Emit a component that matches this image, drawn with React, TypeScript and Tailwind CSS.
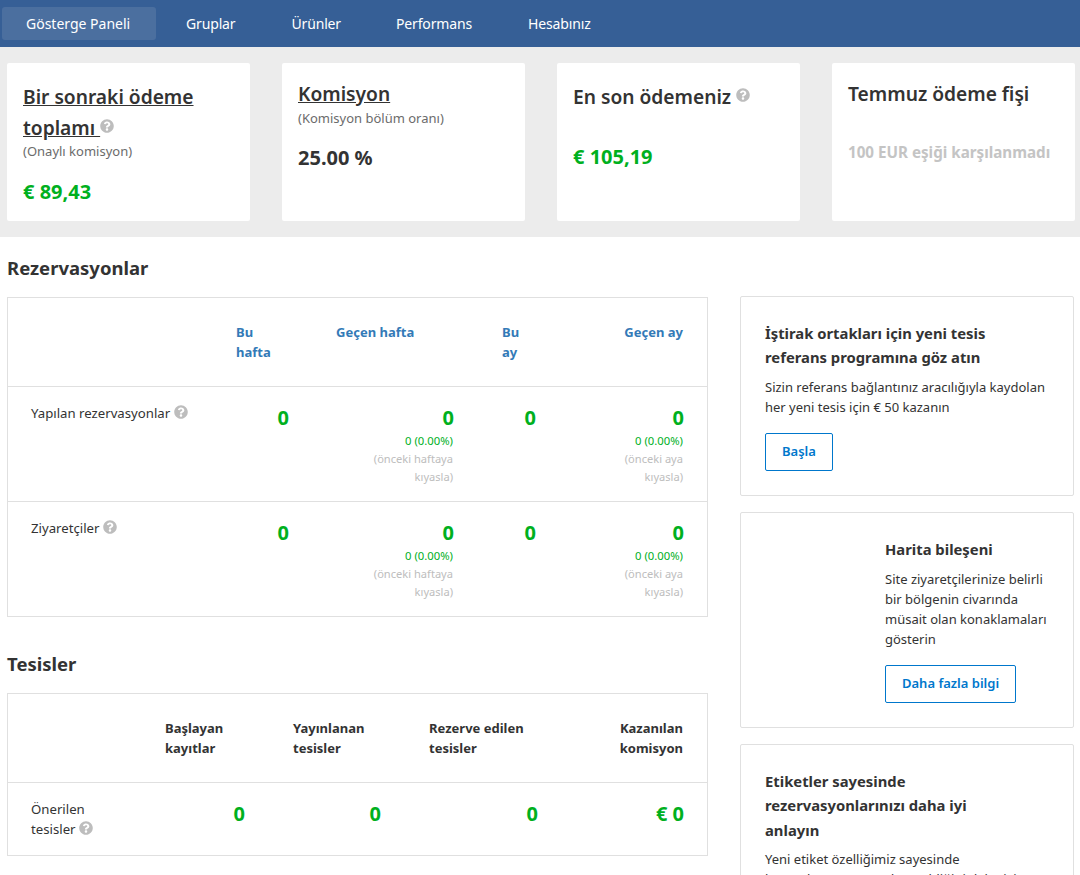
import React from 'react';
import { FaQuestionCircle } from 'react-icons/fa';

const Help = ({ className = 'align-[-1px]' }: { className?: string }) => (
  <FaQuestionCircle size={14} className={`inline-block text-[#bdbdbd] ${className}`} />
);

const Value = ({ children }: { children: React.ReactNode }) => (
  <div className="text-right -mr-[1px] text-[20px] leading-[30px] font-bold text-[#00b01e]">{children}</div>
);

const Delta = () => (
  <div className="text-[11.3px] leading-[18px] text-[#00b01e] -mt-[1px]">0 (0.00%)</div>
);

const Compare = ({ text }: { text: string }) => (
  <div className="text-[11.1px] leading-[18px] text-[#bdbdbd]">
    (önceki {text}
    <br />
    kıyasla)
  </div>
);

const BookingRow = ({ label }: { label: string }) => (
  <div className="grid grid-cols-[193px_64px_165px_82px_148px] h-[115px] pt-[16px] border-t border-[#e0e0e0] px-[23px]">
    <div className="text-[13.2px] leading-[20px] text-[#333]">
      {label} <Help />
    </div>
    <Value>0</Value>
    <div className="text-right">
      <Value>0</Value>
      <Delta />
      <Compare text="haftaya" />
    </div>
    <Value>0</Value>
    <div className="text-right">
      <Value>0</Value>
      <Delta />
      <Compare text="aya" />
    </div>
  </div>
);

const SideCard = ({ title, text, button, className }: { title: string; text: React.ReactNode; button?: string; className?: string }) => (
  <div className={`border border-[#e0e0e0] rounded-[2px] bg-white pt-[24px] ${className ?? ''}`}>
    <h3 className="max-w-[250px] text-[14.8px] leading-[24.4px] font-bold text-[#333]">{title}</h3>
    <p className="text-[13px] leading-[20px] text-[#333] mt-[7.2px]">{text}</p>
    {button && (
      <button className="mt-[16px] h-[38px] px-[16px] border border-[#0077cc] rounded-[2px] text-[13px] font-semibold text-[#0077cc]">
        {button}
      </button>
    )}
  </div>
);

export default function App() {
  return (
    <div className="h-[875px] w-[1080px] overflow-hidden bg-white text-[#333] font-['Noto_Sans','Open_Sans',sans-serif]">
      <nav className="h-[47px] bg-[#365f96] flex items-center pl-[2px] text-[14px] text-white tracking-[-0.15px]">
        <div className="h-[33px] w-[154px] pl-[24px] mr-[6px] flex items-center rounded-[3px] bg-[#4b6f9f] tracking-normal">Gösterge Paneli</div>
        <div className="h-[33px] px-[24px] mr-[8px] flex items-center">Gruplar</div>
        <div className="h-[33px] px-[24px] mr-[7px] flex items-center">Ürünler</div>
        <div className="h-[33px] px-[24px] mr-[8px] flex items-center">Performans</div>
        <div className="h-[33px] px-[24px] flex items-center">Hesabınız</div>
      </nav>

      <div className="h-[190px] bg-[#ececec] pt-[16px] px-[7px] flex gap-[32px]">
        <div className="w-[243px] shrink-0 h-[158px] bg-white rounded-[2px] px-[16px] pt-[18px]">
          <div className="text-[19.2px] leading-[31px] font-semibold text-[#333]">
            <span className="underline">Bir sonraki ödeme toplamı </span> <Help className="align-[2px]" />
          </div>
          <div className="text-[13px] leading-[16px] text-[#6b6b6b]">(Onaylı komisyon)</div>
          <div className="mt-[18px] text-[20px] leading-[30px] font-bold text-[#00b01e]">€ 89,43</div>
        </div>
        <div className="w-[243px] shrink-0 h-[158px] bg-white rounded-[2px] px-[16px] pt-[15px]">
          <div className="text-[19.2px] leading-[32px] font-semibold underline">Komisyon</div>
          <div className="text-[13px] leading-[16px] text-[#6b6b6b]">(Komisyon bölüm oranı)</div>
          <div className="mt-[17px] text-[20px] leading-[30px] font-bold">25.00 %</div>
        </div>
        <div className="w-[243px] shrink-0 h-[158px] bg-white rounded-[2px] px-[16px] pt-[18px]">
          <div className="text-[19.2px] leading-[32px] font-semibold">
            En son ödemeniz <Help className="align-[2px]" />
          </div>
          <div className="mt-[29px] text-[20px] leading-[30px] font-bold text-[#00b01e]">€ 105,19</div>
        </div>
        <div className="w-[243px] shrink-0 h-[158px] bg-white rounded-[2px] px-[16px] pt-[15px]">
          <div className="text-[19.2px] leading-[32px] font-semibold">Temmuz ödeme fişi</div>
          <div className="mt-[32px] text-[15.2px] leading-[20px] font-bold text-[#c4c4c4] whitespace-nowrap">100 EUR eşiği karşılanmadı</div>
        </div>
      </div>

      <div className="flex pl-[7px] pt-[17px]">
        <div className="w-[701px]">
          <h2 className="text-[18.5px] leading-[28px] font-bold text-[#333]">Rezervasyonlar</h2>
          <div className="mt-[15px] border border-[#e0e0e0]">
            <div className="grid grid-cols-[193px_64px_165px_82px_148px] h-[88px] px-[23px] pt-[24px] text-[13px] leading-[20px] font-bold text-[#337ab7]">
              <div />
              <div className="pl-[12px]">Bu<br />hafta</div>
              <div className="pl-[48px]">Geçen hafta</div>
              <div className="pl-[49px]">Bu<br />ay</div>
              <div className="text-right">Geçen ay</div>
            </div>
            <BookingRow label="Yapılan rezervasyonlar" />
            <BookingRow label="Ziyaretçiler" />
          </div>

          <h2 className="mt-[33px] text-[18.5px] leading-[28px] font-bold text-[#333]">Tesisler</h2>
          <div className="mt-[15px] border border-[#e0e0e0]">
            <div className="grid grid-cols-[134px_79px_136px_157px_146px] h-[88px] px-[23px] pt-[24px] text-[13px] leading-[20px] font-bold text-[#333]">
              <div />
              <div className="whitespace-nowrap">Başlayan<br />kayıtlar</div>
              <div className="pl-[49px] whitespace-nowrap">Yayınlanan<br />tesisler</div>
              <div className="pl-[49px] whitespace-nowrap">Rezerve edilen<br />tesisler</div>
              <div className="text-right">Kazanılan<br />komisyon</div>
            </div>
            <div className="grid grid-cols-[134px_79px_136px_157px_146px] h-[73px] px-[23px] pt-[16px] border-t border-[#e0e0e0]">
              <div className="text-[13.2px] leading-[20px]">Önerilen<br />tesisler <Help /></div>
              <Value>0</Value>
              <Value>0</Value>
              <Value>0</Value>
              <Value>€ 0</Value>
            </div>
          </div>
        </div>

        <div className="ml-[32px] w-[334px] pt-[42px] flex flex-col gap-[16px]">
          <SideCard
            className="h-[200px] px-[24px]"
            title="İştirak ortakları için yeni tesis referans programına göz atın"
            text="Sizin referans bağlantınız aracılığıyla kaydolan her yeni tesis için € 50 kazanın"
            button="Başla"
          />
          <SideCard
            className="h-[216px] pl-[144px] pr-[24px]"
            title="Harita bileşeni"
            text="Site ziyaretçilerinize belirli bir bölgenin civarında müsait olan konaklamaları gösterin"
            button="Daha fazla bilgi"
          />
          <SideCard
            className="px-[24px] pb-[24px]"
            title="Etiketler sayesinde rezervasyonlarınızı daha iyi anlayın"
            text={<>Yeni etiket özelliğimiz sayesinde<br />kazançlarınızın nereden geldiğini daha iyi görün</>}
          />
        </div>
      </div>
    </div>
  );
}
